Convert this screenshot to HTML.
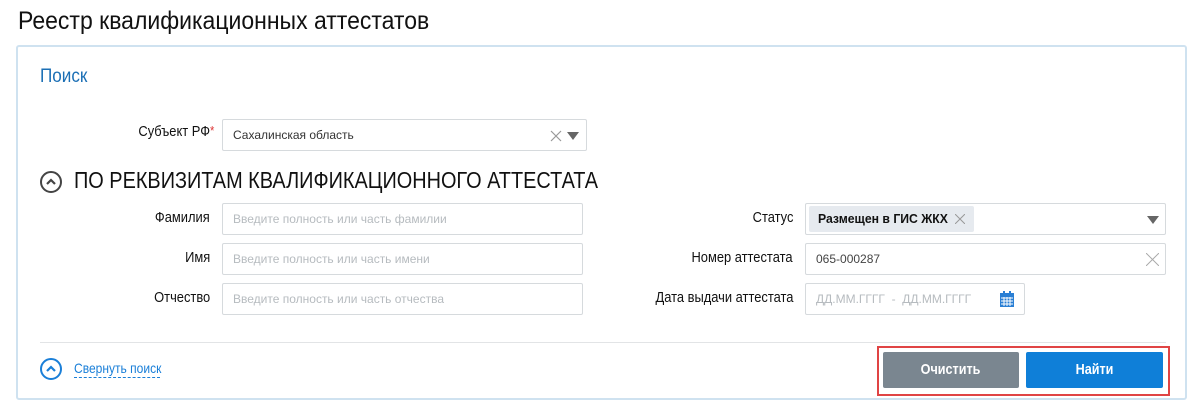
<!DOCTYPE html><html><head><meta charset="utf-8"><style>
*{margin:0;padding:0;box-sizing:border-box}
body{width:1200px;height:408px;background:#fff;font-family:"Liberation Sans Narrow","Liberation Sans",sans-serif;position:relative;overflow:hidden;color:#222}
.a{position:absolute}
.n{display:inline-block;transform:scaleX(.84);transform-origin:left center;white-space:nowrap}
.r{transform-origin:right center}
.lbl{position:absolute;font-size:15px;color:#111;text-align:right;white-space:nowrap}
.lbl .n{transform:scaleX(.86)}
.inp{position:absolute;border:1px solid #d6dadd;border-radius:2px;height:32px;background:#fff;font-family:"Liberation Sans",sans-serif;font-size:12px;color:#b6bbbf;padding-left:10px;line-height:30px;white-space:nowrap}
.circ{position:absolute;width:22px;height:22px;border-radius:50%;border:2.5px solid #444}
</style></head><body>
<div class="a" style="left:18px;top:7px;font-size:25px;color:#111"><span class="n" style="transform:scaleX(.92)">Реестр квалификационных аттестатов</span></div>
<div class="a" style="left:16px;top:45px;width:1171px;height:355px;border:2px solid #cfe2f0;border-radius:3px"></div>
<div class="a" style="left:40px;top:66px;font-size:19px;color:#1b6fb5"><span class="n" style="transform:scaleX(.9)">Поиск</span></div>

<div class="lbl" style="right:986px;top:123px"><span class="n r">Субъект РФ<span style="color:#d33;font-size:13px;vertical-align:top">*</span></span></div>
<div class="inp" style="left:222px;top:119px;width:365px;color:#333">Сахалинская область
<svg class="a" style="left:327px;top:10px" width="12" height="12"><path d="M1 1L11 11M11 1L1 11" stroke="#999" stroke-width="1.2"/></svg>
<svg class="a" style="left:344px;top:12px" width="12" height="9"><path d="M0 0H12L6 8Z" fill="#666"/></svg></div>

<div class="circ" style="left:40px;top:171px"><svg class="a" style="left:3px;top:4px" width="12" height="9"><path d="M2 7L6 3L10 7" stroke="#444" stroke-width="2.2" fill="none"/></svg></div>
<div class="a" style="left:74px;top:167px;font-size:23px;color:#111"><span class="n" style="transform:scaleX(.865)">ПО РЕКВИЗИТАМ КВАЛИФИКАЦИОННОГО АТТЕСТАТА</span></div>

<div class="lbl" style="right:990px;top:209px"><span class="n r">Фамилия</span></div>
<div class="inp" style="left:222px;top:203px;width:361px">Введите полность или часть фамилии</div>
<div class="lbl" style="right:990px;top:249px"><span class="n r">Имя</span></div>
<div class="inp" style="left:222px;top:243px;width:361px">Введите полность или часть имени</div>
<div class="lbl" style="right:990px;top:289px"><span class="n r">Отчество</span></div>
<div class="inp" style="left:222px;top:283px;width:361px">Введите полность или часть отчества</div>

<div class="lbl" style="right:407px;top:209px"><span class="n r">Статус</span></div>
<div class="inp" style="left:805px;top:203px;width:361px;padding-left:3px">
<div class="a" style="left:3px;top:2px;width:165px;height:26px;background:#e6eaef;border-radius:2px;line-height:26px;padding-left:9px;color:#111;font-weight:bold;font-size:13px"><span class="n" style="transform:scaleX(.94)">Размещен в ГИС ЖКХ</span><svg class="a" style="left:146px;top:8px" width="10" height="10"><path d="M0 0L10 10M10 0L0 10" stroke="#999" stroke-width="1"/></svg></div>
<svg class="a" style="left:341px;top:12px" width="12" height="9"><path d="M0 0H12L6 8Z" fill="#666"/></svg></div>
<div class="lbl" style="right:407px;top:249px"><span class="n r">Номер аттестата</span></div>
<div class="inp" style="left:805px;top:243px;width:361px;color:#444">065-000287<svg class="a" style="left:340px;top:9px" width="13" height="13"><path d="M0 0L13 13M13 0L0 13" stroke="#aaa" stroke-width="1"/></svg></div>
<div class="lbl" style="right:407px;top:289px"><span class="n r">Дата выдачи аттестата</span></div>
<div class="inp" style="left:805px;top:283px;width:220px">ДД.ММ.ГГГГ &nbsp;-&nbsp; ДД.ММ.ГГГГ
<svg class="a" style="left:194px;top:7px" width="14" height="16"><rect x="0" y="2" width="14" height="14" fill="#2a7fd4"/><rect x="3" y="0" width="2" height="4" fill="#2a7fd4"/><rect x="9" y="0" width="2" height="4" fill="#2a7fd4"/><path d="M1 7H13M1 10H13M1 13H13M4 6V15M7 6V15M10 6V15" stroke="#fff" stroke-width="1"/></svg></div>

<div class="a" style="left:40px;top:342px;width:1126px;height:1px;background:#e2e4e6"></div>
<div class="circ" style="left:40px;top:358px;border-color:#1a7fd8"><svg class="a" style="left:3px;top:4px" width="12" height="9"><path d="M2 7L6 3L10 7" stroke="#1a7fd8" stroke-width="2.2" fill="none"/></svg></div>
<div class="a" style="left:74px;top:361px;font-size:14px;color:#1a7fd8;line-height:15px"><span class="n" style="transform:scaleX(.86)">Свернуть поиск</span></div>
<div class="a" style="left:74px;top:377px;width:86px;border-bottom:1px dashed #1a7fd8"></div>

<div class="a" style="left:877px;top:346px;width:293px;height:50px;border:2px solid #e04444"></div>
<div class="a" style="left:883px;top:352px;width:136px;height:36px;background:#7a8690;border-radius:2px;color:#fff;font-weight:bold;font-size:15px;text-align:center;line-height:36px"><span class="n" style="transform-origin:center">Очистить</span></div>
<div class="a" style="left:1026px;top:352px;width:137px;height:36px;background:#0f7fd8;border-radius:2px;color:#fff;font-weight:bold;font-size:15px;text-align:center;line-height:36px"><span class="n" style="transform-origin:center">Найти</span></div>
</body></html>
